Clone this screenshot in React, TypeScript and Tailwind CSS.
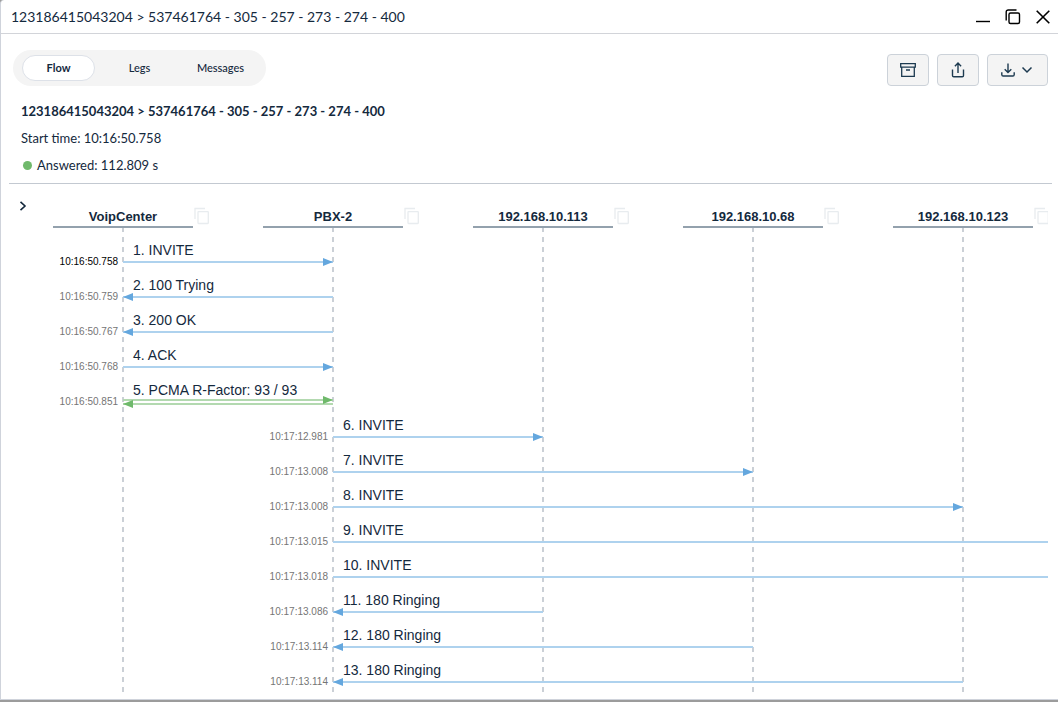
import React, { useState } from "react";

type Message = {
  time: string;
  label: string;
  origin: 0 | 1;
  span: 1 | 2 | 3 | 4 | 5;
  direction: "right" | "left" | "both";
};

const participants = ["VoipCenter", "PBX-2", "192.168.10.113", "192.168.10.68", "192.168.10.123"];

const messages: Message[] = [
  { time: "10:16:50.758", label: "1. INVITE", origin: 0, span: 1, direction: "right" },
  { time: "10:16:50.759", label: "2. 100 Trying", origin: 0, span: 1, direction: "left" },
  { time: "10:16:50.767", label: "3. 200 OK", origin: 0, span: 1, direction: "left" },
  { time: "10:16:50.768", label: "4. ACK", origin: 0, span: 1, direction: "right" },
  { time: "10:16:50.851", label: "5. PCMA R-Factor: 93 / 93", origin: 0, span: 1, direction: "both" },
  { time: "10:17:12.981", label: "6. INVITE", origin: 1, span: 1, direction: "right" },
  { time: "10:17:13.008", label: "7. INVITE", origin: 1, span: 2, direction: "right" },
  { time: "10:17:13.008", label: "8. INVITE", origin: 1, span: 3, direction: "right" },
  { time: "10:17:13.015", label: "9. INVITE", origin: 1, span: 4, direction: "right" },
  { time: "10:17:13.018", label: "10. INVITE", origin: 1, span: 5, direction: "right" },
  { time: "10:17:13.086", label: "11. 180 Ringing", origin: 1, span: 1, direction: "left" },
  { time: "10:17:13.114", label: "12. 180 Ringing", origin: 1, span: 2, direction: "left" },
  { time: "10:17:13.114", label: "13. 180 Ringing", origin: 1, span: 3, direction: "left" },
];

const LANE = 210;

function Arrow({ span, direction }: { span: number; direction: Message["direction"] }) {
  const end = span * LANE;
  if (direction === "both") {
    return (
      <svg width={end} height="8" className="block overflow-visible" aria-hidden="true">
        <path d={`M0 2H${end}M0 6H${end}`} stroke="#b3d9b0" strokeWidth="2" />
        <path d={`M${end} 2l-10-4v8zM0 6l10-4v8z`} fill="#6fb96b" />
      </svg>
    );
  }
  return (
    <svg width={end} height="8" className="block overflow-visible" aria-hidden="true">
      <path d={`M0 4H${end}`} stroke="#aed2ee" strokeWidth="2" />
      <path d={direction === "right" ? `M${end} 4l-10-4v8z` : "M0 4l10-4v8z"} fill="#64a7de" />
    </svg>
  );
}

function MessageRow({ message, current }: { message: Message; current: boolean }) {
  return (
    <li className={`flex h-[35px] items-end ${message.origin === 1 ? "pl-[210px]" : ""}`}>
      <time
        className={`w-[105px] shrink-0 pr-[5px] text-right text-[10px] leading-3 ${
          current ? "text-black" : "text-[#757575]"
        }`}
      >
        {message.time}
      </time>
      <div className="shrink-0 pb-0.5">
        <div className="pl-2.5 text-sm leading-4">{message.label}</div>
        <Arrow span={message.span} direction={message.direction} />
      </div>
    </li>
  );
}

function Tabs() {
  const [active, setActive] = useState("Flow");
  return (
    <div role="tablist" className="flex h-9 items-center gap-2 rounded-full bg-[#f4f4f4] px-[9px]">
      {["Flow", "Legs", "Messages"].map((name) => (
        <button
          key={name}
          type="button"
          role="tab"
          aria-selected={active === name}
          onClick={() => setActive(name)}
          className={`h-[26px] min-w-[73px] rounded-full border text-[11px] ${
            active === name ? "border-[#dde1e8] bg-white font-bold" : "border-transparent font-medium"
          }`}
        >
          {name}
        </button>
      ))}
    </div>
  );
}

const toolButton =
  "flex h-8 items-center justify-center rounded border border-[#ccd2d9] bg-[#f4f4f4] text-[#1d3a50]";

export default function App() {
  return (
    <div className="bg-[#9c9c9c] pb-0.5 font-['Lato',sans-serif] text-[#14293d]">
      <main className="overflow-hidden rounded-tl border-b border-l border-[#cfd3db] bg-white">
        <header className="flex h-[34px] items-center justify-between border-b border-[#d2d4d9] pr-2 pl-2.5">
          <h1 className="text-sm">123186415043204 &gt; 537461764 - 305 - 257 - 273 - 274 - 400</h1>
          <div className="flex items-center gap-[15px] text-black">
            <button type="button" aria-label="Minimize">
              <svg width="14" height="16" viewBox="0 0 14 16" className="block">
                <path d="M0 12.5h14" stroke="currentColor" strokeWidth="1.4" />
              </svg>
            </button>
            <button type="button" aria-label="Restore">
              <svg width="16" height="16" viewBox="0 0 16 16" fill="none" stroke="currentColor" strokeWidth="1.4" className="block">
                <rect x="4" y="4" width="10.5" height="10.5" rx="1.5" />
                <path d="M1.2 11.5V3a2 2 0 0 1 2-2h8.3" />
              </svg>
            </button>
            <button type="button" aria-label="Close">
              <svg width="14" height="14" viewBox="0 0 14 14" className="block">
                <path d="M.7.7l12.6 12.6M13.3.7L.7 13.3" stroke="currentColor" strokeWidth="1.6" />
              </svg>
            </button>
          </div>
        </header>

        <div className="flex items-start justify-between pt-4 pr-2.5 pl-3">
          <Tabs />
          <div className="flex gap-2 pt-1">
            <button type="button" aria-label="Archive" className={`${toolButton} w-[42px]`}>
              <svg width="16" height="14" viewBox="0 0 16 14" fill="none" stroke="currentColor" strokeWidth="1.3">
                <path d="M.7.7h14.6v3.4H.7zM1.7 4.1v9.2h12.6V4.1M6 7h4" />
              </svg>
            </button>
            <button type="button" aria-label="Share" className={`${toolButton} w-[42px]`}>
              <svg width="14" height="16" viewBox="0 0 14 16" fill="none" stroke="currentColor" strokeWidth="1.4">
                <path d="M1.5 7.5v6a1.3 1.3 0 0 0 1.3 1.3h8.4a1.3 1.3 0 0 0 1.3-1.3v-6M7 11V1.2M3.9 4.2L7 1.1l3.1 3.1" />
              </svg>
            </button>
            <button type="button" aria-label="Download" className={`${toolButton} w-[61px] gap-1.5 pr-0.5`}>
              <svg width="14" height="14" viewBox="0 0 14 14" fill="none" stroke="currentColor" strokeWidth="1.4">
                <path d="M.8 9.2v2.6A1.3 1.3 0 0 0 2.1 13h9.8a1.3 1.3 0 0 0 1.3-1.2V9.2M7 .5v8.8M3.7 6.2L7 9.4l3.3-3.2" />
              </svg>
              <svg width="12" height="8" viewBox="0 0 12 8" fill="none" stroke="currentColor" strokeWidth="1.5">
                <path d="M1.5 1.5L6 6l4.5-4.5" />
              </svg>
            </button>
          </div>
        </div>

        <section className="mr-1.5 ml-2 border-b border-[#c3c9d1] px-3 pt-3 pb-1 text-[13px] leading-[27px]">
          <h2 className="font-bold">123186415043204 &gt; 537461764 - 305 - 257 - 273 - 274 - 400</h2>
          <p>Start time: 10:16:50.758</p>
          <p className="flex items-center">
            <span className="mr-[5px] ml-0.5 size-[9px] rounded-full bg-[#70b96c]" />
            Answered: 112.809 s
          </p>
        </section>

        <section
          aria-label="Call flow"
          className="mr-2.5 ml-[17px] overflow-hidden pb-[7px] font-['Liberation_Sans',Arial,sans-serif]"
        >
          <div className="flex h-11 items-end">
            <button type="button" aria-label="Expand" className="w-[35px] shrink-0 self-start pt-[17px]">
              <svg width="10" height="10" viewBox="0 0 10 10" fill="none" stroke="currentColor" strokeWidth="1.6" className="block">
                <path d="M2.5 .8L7 5 2.5 9.2" />
              </svg>
            </button>
            {participants.map((name) => (
              <div key={name} className="flex w-[210px] shrink-0 items-end">
                <div className="w-[140px] border-b-2 border-[#93a1ad] pb-px text-center text-[13px] leading-4 font-bold">
                  {name}
                </div>
                <button type="button" aria-label={`Copy ${name}`} className="ml-px pb-[3px]">
                  <svg width="16" height="18" viewBox="0 0 16 18" fill="none" stroke="#e8ecef" strokeWidth="1.3" className="block">
                    <path d="M1 12V1.5h10" />
                    <rect x="4" y="4.7" width="10.3" height="11.8" rx=".5" />
                  </svg>
                </button>
              </div>
            ))}
          </div>
          <div className="relative pt-[5px] pb-1">
            <svg className="absolute inset-0 size-full" aria-hidden="true">
              {[0, 1, 2, 3, 4].map((lane) => (
                <line
                  key={lane}
                  x1={105 + lane * LANE}
                  x2={105 + lane * LANE}
                  y1="0"
                  y2="100%"
                  stroke="#cbd0d6"
                  strokeWidth="2"
                  strokeDasharray="5 5"
                  strokeDashoffset="1"
                />
              ))}
            </svg>
            <ol className="relative">
              {messages.map((message, index) => (
                <MessageRow key={message.label} message={message} current={index === 0} />
              ))}
            </ol>
          </div>
        </section>
      </main>
    </div>
  );
}
